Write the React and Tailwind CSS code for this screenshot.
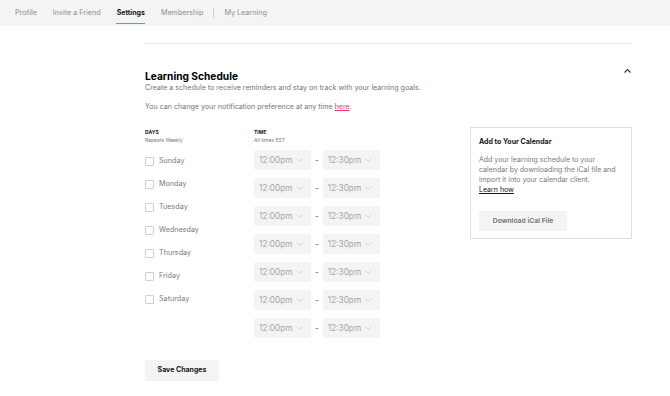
import { useState } from "react";

const days = ["Sunday", "Monday", "Tuesday", "Wednesday", "Thursday", "Friday", "Saturday"];
const tabs = ["Profile", "Invite a Friend", "Settings", "Membership"];

function Chevron({ up, w = 0.8 }) {
  return (
    <svg width="7" height="4" viewBox="0 0 7 4" fill="none" className={up ? "rotate-180" : ""}>
      <path d="M0.5 0.5L3.5 3.5L6.5 0.5" stroke="currentColor" strokeWidth={w} />
    </svg>
  );
}

function TimeSelect({ value }) {
  return (
    <div className="flex h-[20px] w-[57px] items-center justify-between rounded-[2px] bg-[#f4f4f4] pl-[5px] pr-[8px] text-[8.3px] text-[#a6a6a6]">
      <span>{value}</span>
      <span className="text-[#c8c8c8]">
        <Chevron />
      </span>
    </div>
  );
}

export default function App() {
  const [checked, setChecked] = useState({});

  return (
    <div className="min-h-[396px] bg-white font-['Inter',sans-serif] text-[#161616]">
      {/* Top tabs */}
      <div className="flex h-[26px] items-center bg-[#f4f4f4] pl-[15px] text-[7.2px] text-[#8d8d8d]">
        {tabs.map((t) => (
          <div key={t} className="relative mr-[16px] flex h-full items-center">
            <span className={t === "Settings" ? "text-[7px] font-bold text-[#161616]" : ""}>{t}</span>
            {t === "Settings" && (
              <div className="absolute bottom-[2px] left-[-1px] right-0 h-[1.5px] bg-[#ee5a9c]" />
            )}
          </div>
        ))}
        <div className="mr-[10px] ml-[-6px] h-[10px] w-px bg-[#d0d0d0]" />
        <span>My Learning</span>
      </div>

      <div className="ml-[145px] mr-[38px]">
        <div className="mt-[17px] h-px bg-[#e8e8e8]" />

        {/* Header */}
        <div className="mt-[25px] flex items-start justify-between">
          <div>
            <h1 className="text-[10.2px] font-bold leading-[14px] text-black">Learning Schedule</h1>
            <p className="text-[7.1px] leading-[10px] text-[#747474]">
              Create a schedule to receive reminders and stay on track with your learning goals.
            </p>
            <p className="mt-[9px] text-[7.1px] leading-[10px] text-[#747474]">
              You can change your notification preference at any time{" "}
              <a className="text-[#e6337f] underline">here</a>.
            </p>
          </div>
          <div className="mr-[1px] text-[#333]">
            <Chevron up w={1.1} />
          </div>
        </div>

        {/* Body */}
        <div className="mt-[17px] flex">
          <div className="w-[109px]">
            <div className="text-[5px] leading-[7px] font-bold text-[#161616]">DAYS</div>
            <div className="mt-[1px] text-[5px] leading-[7px] text-[#7a7a7a]">Repeats Weekly</div>
            <div className="mt-[13px] flex flex-col gap-[14px]">
              {days.map((d) => (
                <label key={d} className="flex h-[9px] items-center gap-[5px] text-[7.2px] text-[#7a7a7a]">
                  <input
                    type="checkbox"
                    className="h-[9px] w-[9px] appearance-none rounded-[1px] border border-[#d0d0d0] bg-white"
                    checked={!!checked[d]}
                    onChange={() => setChecked((p) => ({ ...p, [d]: !p[d] }))}
                  />
                  {d}
                </label>
              ))}
            </div>
          </div>

          <div className="w-[216px]">
            <div className="text-[5px] leading-[7px] font-bold text-[#161616]">TIME</div>
            <div className="mt-[1px] text-[5px] leading-[7px] text-[#7a7a7a]">All times EST</div>
            <div className="mt-[6px] flex flex-col gap-[8px]">
              {days.map((d) => (
                <div key={d} className="flex items-center">
                  <TimeSelect value="12:00pm" />
                  <span className="mx-[4px] text-[8px] text-[#555]">-</span>
                  <TimeSelect value="12:30pm" />
                </div>
              ))}
            </div>
          </div>

          <div className="mt-[-2px] h-[112px] w-[162px] border border-[#e0e0e0] px-[8px] pt-[9px]">
            <div className="text-[7px] leading-[9px] font-bold text-[#161616]">Add to Your Calendar</div>
            <p className="mt-[9px] text-[7px] leading-[10px] text-[#7a7a7a]">
              Add your learning schedule to your calendar by downloading the iCal file and import it into your calendar client.
            </p>
            <a className="block text-[7px] leading-[10px] text-[#161616] underline">Learn how</a>
            <div className="mt-[16px] flex h-[20px] w-[88px] items-center justify-center bg-[#f4f4f4] text-[6.8px] font-semibold text-[#6f6f6f]">
              Download iCal File
            </div>
          </div>
        </div>

        <button className="mt-[22px] flex h-[21px] w-[74px] items-center justify-center bg-[#f4f4f4] text-[7px] font-bold text-[#161616]">
          Save Changes
        </button>
      </div>
    </div>
  );
}
